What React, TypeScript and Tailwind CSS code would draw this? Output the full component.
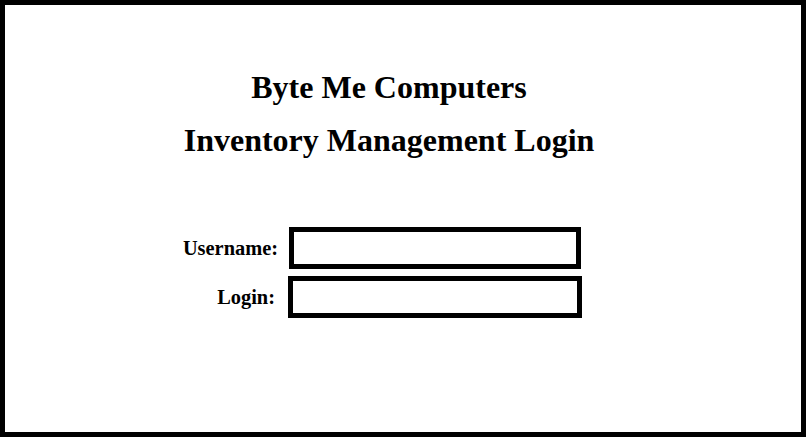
import React from "react";

const fields = [
    { label: "Username:", labelCls: "", inputCls: "ml-[11px] w-[292px]" },
    { label: "Login:", labelCls: "pr-[3px]", inputCls: "ml-[10px] w-[294px]" },
];

const App: React.FC = () => {
    return (
        <div className="w-[806px] h-[437px] border-[5px] border-black bg-white font-['Liberation_Serif',serif] text-black">
            <div className="pt-[56px] pr-[28px] text-center font-bold text-[32px] leading-[53px]">
                <h1>Byte Me Computers</h1>
                <h1>Inventory Management Login</h1>
            </div>

            <form className="mt-[60px] pl-[158px] flex flex-col gap-[7px]">
                {fields.map((f) => (
                    <div key={f.label} className="flex flex-row items-center">
                        <label
                            className={`w-[115px] text-right font-bold text-[20.4px] leading-[23px] ${f.labelCls}`}
                        >
                            {f.label}
                        </label>
                        <input
                            type="text"
                            className={`${f.inputCls} h-[42px] border-[5px] border-black bg-white outline-none`}
                        />
                    </div>
                ))}
            </form>
        </div>
    );
};

export default App;
